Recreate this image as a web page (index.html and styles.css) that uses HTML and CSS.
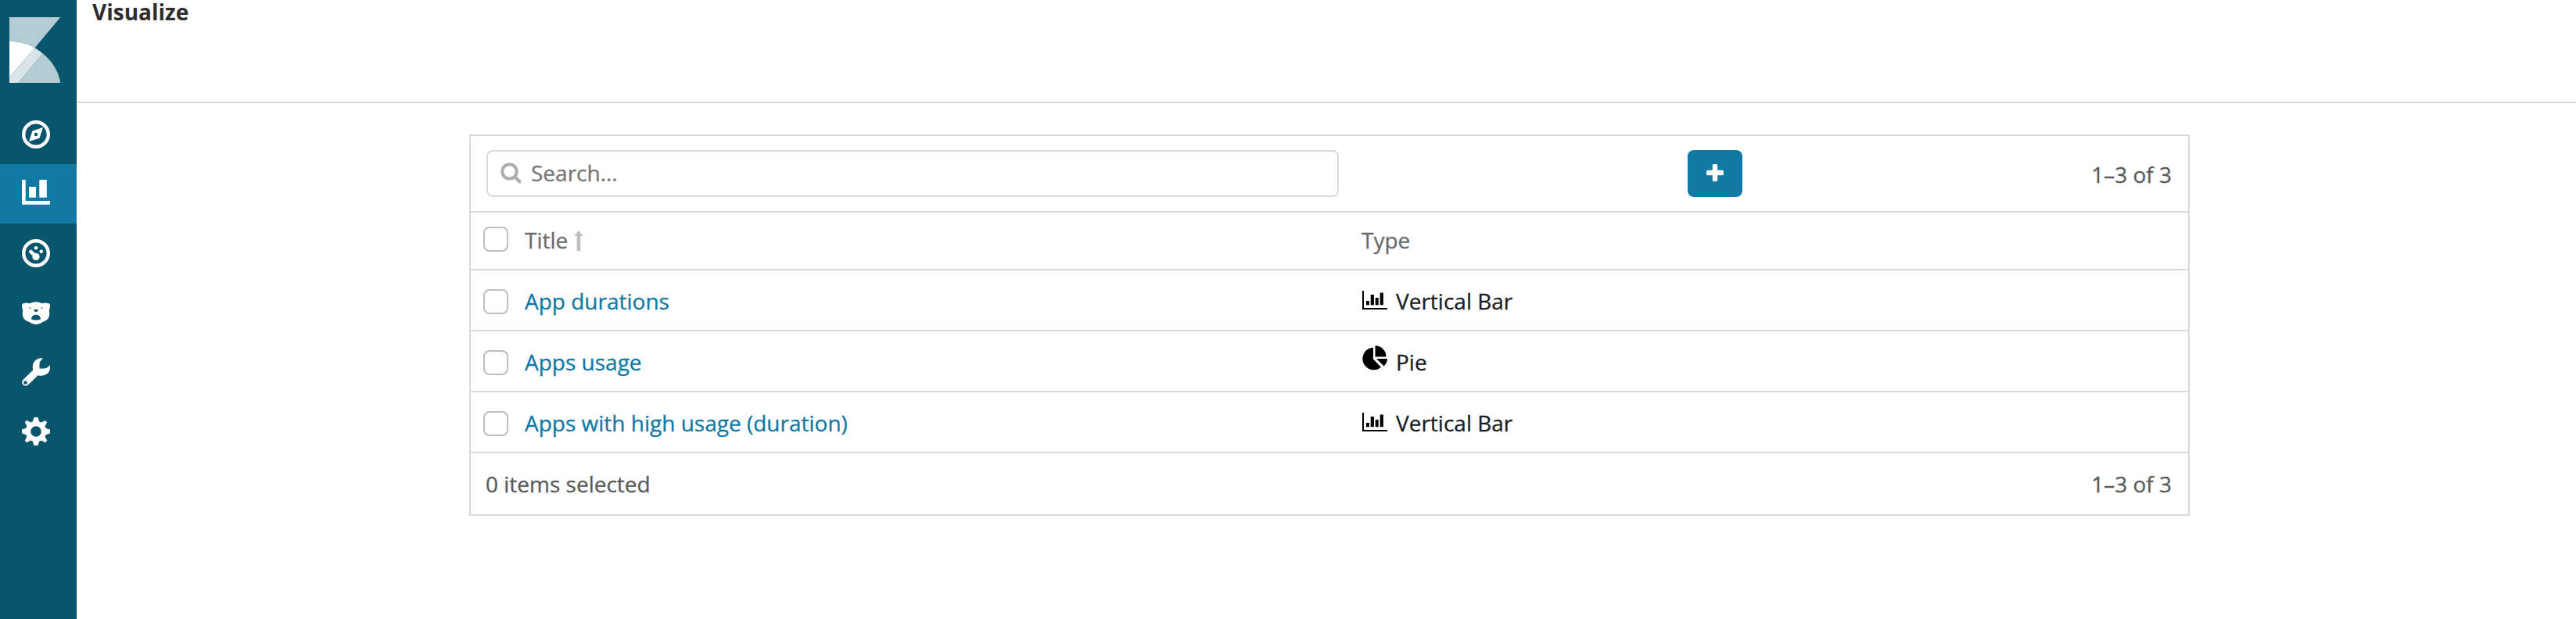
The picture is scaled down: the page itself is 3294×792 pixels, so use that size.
FILE: index.html
```html
<!DOCTYPE html>
<html lang="en">
<head>
<meta charset="utf-8">
<title>Visualize</title>
<link rel="stylesheet" href="styles.css">
</head>
<body>
<div class="app">
  <nav class="sidebar">
    <a class="logo">
      <svg width="66" height="84" viewBox="0 0 66 84">
        <path fill="#b4ccd3" d="M0 0H65.3L32.5 39.300C22 33.500 12 31 0 31z"/>
        <path fill="#fff" d="M0 31C12 31 22 33.500 32.500 39.300L0 77z"/>
        <path fill="#dae5e9" d="M32.500 39.300Q38 42.500 42.600 46.500L11.500 84H0V77z"/>
        <path fill="#b4ccd3" d="M42.600 46.500C54 55.500 62.500 68 65.300 84H11.500z"/>
      </svg>
    </a>
    <a class="nav-item">
      <svg width="36" height="36" viewBox="0 0 36 36">
        <circle cx="18" cy="18" r="15.800" fill="none" stroke="#fff" stroke-width="4.400"/>
        <path fill="#fff" fill-rule="evenodd" d="M27 9L22.500 22.800L9 27L13.500 13.500zM18 15.700a2.300 2.300 0 1 0 0 4.600a2.300 2.300 0 1 0 0-4.600z"/>
      </svg>
    </a>
    <a class="nav-item nav-item-active">
      <svg width="36" height="32" viewBox="0 0 36 32">
        <path fill="#fff" d="M0 0h4.700v27H36v4.700H0zM9 9h9v13.700H9zM22.300 0h9.500v22.700h-9.500z"/>
      </svg>
    </a>
    <a class="nav-item">
      <svg width="36" height="36" viewBox="0 0 36 36">
        <circle cx="18" cy="18" r="15.800" fill="none" stroke="#fff" stroke-width="4.400"/>
        <circle cx="18" cy="22.500" r="4.600" fill="#fff"/>
        <path d="M11.300 16L17 21" stroke="#fff" stroke-width="4.600" stroke-linecap="round"/>
        <circle cx="18" cy="11.300" r="2.300" fill="#fff"/>
        <circle cx="24.700" cy="15.800" r="2.300" fill="#fff"/>
      </svg>
    </a>
    <a class="nav-item nav-bear">
      <svg width="36" height="30" viewBox="0 0 36 30">
        <path fill="#fff" fill-rule="evenodd" d="M2 2Q6 1 10 2.200Q14 .3 18 .3Q22 .3 26 2.200Q30 1 34 2Q36 2.500 36 5Q36.200 8 34.700 10.500Q35.600 14 35 18Q34 23.500 27 25.700Q22.500 29.300 18 29.300Q13.500 29.300 9 25.700Q2 23.500 1 18Q.4 14 1.300 10.500Q-.2 8 0 5Q0 2.500 2 2zM9 7Q10 9.500 12.500 8.500zM27 7Q26 9.500 23.500 8.500zM15 10.300Q18 9 21 10.300Q20.500 12.700 18 13.200Q15.500 12.700 15 10.300zM12 21.500Q13 16.800 18 16.800Q23 16.800 24 21.500Q24 23.500 18 23.500Q12 23.500 12 21.500z"/>
      </svg>
    </a>
    <a class="nav-item">
      <svg width="36" height="36" viewBox="0 0 36 36">
        <path fill="#fff" fill-rule="evenodd" d="M27 .5Q22.500 4 22.500 7.500V13.500H28.500Q32 13.500 35.700 9.300Q37 16 32.500 20Q27.500 24.200 20.500 22.200L8.200 34.300Q4.800 37 1.600 34.300Q-1.200 31.200 1.400 28L14.200 15.500Q12.300 8.500 16.500 3.800Q20.800-.7 27 .5zM4.500 29.300a2.300 2.300 0 1 0 0 4.600a2.300 2.300 0 1 0 0-4.600z"/>
      </svg>
    </a>
    <a class="nav-item">
      <svg width="36" height="36" viewBox="0 0 36 36">
        <path fill="#fff" fill-rule="evenodd" d="M15.500 0h5l1.700 5.400l2.600 1.100l5-2.600l2.400 2.400l-2.600 5l1.100 2.600L36 15.500v5l-5.300 1.700l-1.100 2.600l2.600 5l-2.400 2.400l-5-2.600l-2.600 1.100L20.500 36h-5l-1.700-5.300l-2.600-1.100l-5 2.600l-2.400-2.400l2.600-5l-1.100-2.600L0 20.500v-5l5.300-1.700l1.100-2.600l-2.600-5l2.400-2.400l5 2.600l2.600-1.100zM18 11.200a6.800 6.800 0 1 0 0 13.600a6.800 6.800 0 1 0 0-13.600z"/>
      </svg>
    </a>
  </nav>
  <main class="content">
    <header class="topbar"><h1 class="page-title">Visualize</h1></header>
    <section class="panel">
      <div class="toolbar">
        <div class="search">
          <svg width="28" height="28" viewBox="0 0 28 28">
            <circle cx="11.500" cy="11.500" r="9.200" fill="none" stroke="#adadad" stroke-width="4"/>
            <path d="M18.500 18.500L24.500 24.500" stroke="#adadad" stroke-width="4.200" stroke-linecap="round"/>
          </svg>
          <span class="placeholder">Search...</span>
        </div>
        <div class="actions">
          <a class="add">
            <svg width="22" height="22" viewBox="0 0 22 22"><path fill="#fff" d="M9.300 0h3.400q1.500 0 1.500 1.500v6.300h6.300q1.500 0 1.500 1.500v3.400q0 1.500-1.500 1.500h-6.300v6.300q0 1.500-1.500 1.500H9.300q-1.500 0-1.500-1.500v-6.300H1.500q-1.500 0-1.500-1.500V9.300q0-1.500 1.500-1.500h6.300V1.500q0-1.500 1.500-1.500z"/></svg>
          </a>
        </div>
        <span class="count">1–3 of 3</span>
      </div>
      <div class="row row-head">
        <span class="check"></span>
        <span class="cell-title">Title
          <svg class="sort" width="12" height="26" viewBox="0 0 12 26"><path fill="#c0c0c0" d="M6 0l6 7H8.300v19H3.700V7H0z"/></svg>
        </span>
        <span class="cell-type">Type</span>
      </div>
      <div class="row">
        <span class="check"></span>
        <a class="cell-title link">App durations</a>
        <span class="cell-type">
          <svg class="type-icon" width="32" height="32" viewBox="0 0 32 32"><path d="M0 4h2v22h30v2H0zM5 17h4v5.300H5zM10.700 9h4.200v13.300h-4.200zM16.700 13h4v9.300h-4zM22.700 6.500h4.200v15.800h-4.200z"/></svg>
          Vertical Bar</span>
      </div>
      <div class="row">
        <span class="check"></span>
        <a class="cell-title link">Apps usage</a>
        <span class="cell-type">
          <svg class="type-icon type-icon-pie" width="32" height="32" viewBox="0 0 32 32"><path d="M14 2.700V17.500L24 27.800A14.300 14.300 0 1 1 14 2.700zM16.500 .3A14 14 0 0 1 30.500 14.400H16.500zM18 17H32Q31.800 22.500 27.700 26.500z"/></svg>
          Pie</span>
      </div>
      <div class="row">
        <span class="check"></span>
        <a class="cell-title link">Apps with high usage (duration)</a>
        <span class="cell-type">
          <svg class="type-icon" width="32" height="32" viewBox="0 0 32 32"><path d="M0 4h2v22h30v2H0zM5 17h4v5.300H5zM10.700 9h4.200v13.300h-4.200zM16.700 13h4v9.300h-4zM22.700 6.500h4.200v15.800h-4.200z"/></svg>
          Vertical Bar</span>
      </div>
      <footer class="panel-footer">
        <span>0 items selected</span>
        <span>1–3 of 3</span>
      </footer>
    </section>
  </main>
</div>
</body>
</html>
```
FILE: styles.css
```css
* { box-sizing: border-box; }
body {
  margin: 0;
  background: #fff;
  color: #2d2d2d;
  font: 28px/40px "Open Sans", sans-serif;
  -webkit-text-stroke: 0.3px currentColor;
}
svg { display: block; flex: none; }
.app { display: flex; height: 792px; }
.sidebar {
  display: flex;
  flex-direction: column;
  flex: none;
  width: 98px;
  background: #09556d;
}
.logo { height: 134px; padding: 22px 0 0 12px; }
.nav-item {
  display: flex;
  height: 76px;
  padding: 20px 0 0 28px;
}
.nav-item-active { background: #1079a4; }
.nav-bear { padding-top: 24px; }
.content { flex: 1; min-width: 0; }
.topbar {
  height: 132px;
  padding-left: 20px;
  border-bottom: 2px solid #d9d9d9;
}
.page-title {
  margin: 0;
  font-size: 28px;
  line-height: 30px;
  font-weight: 700;
  -webkit-text-stroke: 0;
}
.panel {
  width: 2200px;
  margin: 40px 0 0 502px;
  border: 2px solid #d9d9d9;
}
.toolbar {
  display: flex;
  height: 98px;
  padding: 18px 21px 18px 20px;
  border-bottom: 2px solid #d9d9d9;
  color: #5a5a5a;
}
.search {
  display: flex;
  width: 1090px;
  height: 60px;
  padding: 14px 16px;
  border: 2px solid #d9d9d9;
  border-radius: 8px;
}
.placeholder { margin: -7px 0 0 11px; color: #757575; }
.actions { display: flex; justify-content: flex-end; width: 516px; }
.add {
  display: flex;
  justify-content: center;
  width: 70px;
  height: 60px;
  padding-top: 18px;
  border-radius: 8px;
  background: #1079a4;
}
.count { margin: 11px 0 0 auto; }
.row {
  display: grid;
  grid-template-columns: 53px 1070px 1fr;
  height: 78px;
  padding: 19px 16px 0;
  border-bottom: 2px solid #d9d9d9;
}
.row-head { height: 74px; padding-top: 15px; color: #6b6b6b; }
.row-head .check { margin-top: 3px; }
.check {
  width: 32px;
  height: 32px;
  margin-top: 5px;
  border: 2px solid #bebebe;
  border-radius: 8px;
}
.cell-title { display: flex; gap: 8px; }
.sort { margin-top: 8px; }
.link { color: #1079a4; }
.cell-type { display: flex; gap: 11px; }
.row:not(.row-head) .cell-type { color: #191e23; }
.type-icon { margin: 3px 0 0 1px; fill: #000; }
.type-icon-pie { margin-top: -1px; }
.panel-footer {
  display: flex;
  justify-content: space-between;
  height: 78px;
  padding: 19px 21px 0 19px;
  color: #5a5a5a;
}
```
